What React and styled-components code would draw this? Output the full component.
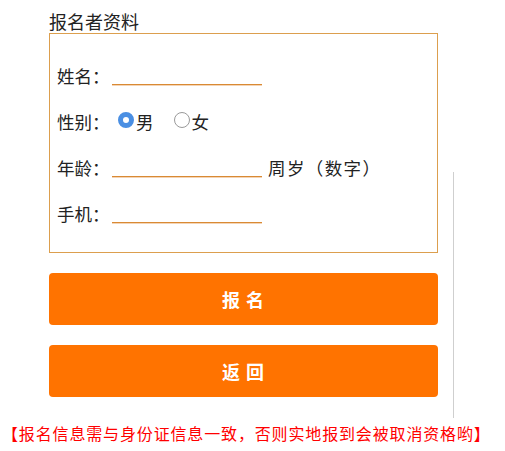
import React, { useState } from "react";
import styled, { createGlobalStyle } from "styled-components";

const GlobalStyle = createGlobalStyle`
  html, body {
    margin: 0;
    padding: 0;
    background: #ffffff;
  }
  body {
    font-family: "Noto Sans CJK SC", "Noto Sans", sans-serif;
    color: #222;
    text-spacing-trim: space-all;
  }
`;

const Page = styled.div`
  width: 505px;
  height: 451px;
  display: flex;
  flex-direction: column;
  overflow: hidden;
`;

const Top = styled.div`
  display: flex;
  gap: 15px;
  padding-left: 49px;
`;

const FormColumn = styled.div`
  width: 389px;
  display: flex;
  flex-direction: column;
`;

const Title = styled.div`
  margin-top: 10px;
  font-size: 18px;
  line-height: 23px;
  color: #222;
`;

const Box = styled.div`
  border: 1px solid #dc9f4e;
  padding: 18px 0 16px 7px;
  display: flex;
  flex-direction: column;
`;

const Row = styled.div`
  height: 46px;
  display: flex;
  align-items: center;
  font-size: 17.5px;
  color: #222;
`;

const Label = styled.span`
  width: 55px;
  flex: none;
`;

const Line = styled.input`
  width: 150px;
  height: 20px;
  box-sizing: border-box;
  border: 0;
  border-bottom: 1px solid #d98a34;
  box-shadow: 0 1px 0 rgba(230, 160, 90, 0.45);
  outline: none;
  background: transparent;
  padding: 0;
  font: inherit;
`;

const Unit = styled.span`
  margin-left: 6px;
  letter-spacing: 1.4px;
`;

const Option = styled.label`
  display: flex;
  align-items: center;
  margin-left: ${({ $first }) => ($first ? "6px" : "20px")};
  cursor: pointer;
`;

const Radio = styled.input`
  appearance: none;
  width: 16px;
  height: 16px;
  margin: 0 2px 2px 0;
  border-radius: 50%;
  box-sizing: border-box;
  border: 1px solid #9a9a9a;
  background: #fff;
  &:checked {
    border: 5px solid #4a8fe3;
  }
`;

const Button = styled.button`
  height: 52px;
  border: none;
  border-radius: 4px;
  background: #ff7300;
  color: #fff;
  font-family: inherit;
  font-size: 18px;
  font-weight: bold;
  letter-spacing: 1px;
  margin-top: 20px;
  cursor: pointer;
`;

const Divider = styled.div`
  width: 1px;
  height: 246px;
  margin-top: 172px;
  background: #cfcfcf;
`;

const Notice = styled.div`
  margin-top: 5px;
  padding-left: 2px;
  font-size: 16px;
  letter-spacing: 0.85px;
  line-height: 20px;
  color: #ff0000;
  white-space: nowrap;
`;

const App = () => {
  const [sex, setSex] = useState("m");
  return (
    <Page>
      <GlobalStyle />
      <Top>
        <FormColumn>
          <Title>报名者资料</Title>
          <Box>
            <Row>
              <Label>姓名：</Label>
              <Line type="text" />
            </Row>
            <Row>
              <Label>性别：</Label>
              <Option $first>
                <Radio type="radio" name="sex" checked={sex === "m"} onChange={() => setSex("m")} />
                男
              </Option>
              <Option>
                <Radio type="radio" name="sex" checked={sex === "f"} onChange={() => setSex("f")} />
                女
              </Option>
            </Row>
            <Row>
              <Label>年龄：</Label>
              <Line type="text" />
              <Unit>周岁（数字）</Unit>
            </Row>
            <Row>
              <Label>手机：</Label>
              <Line type="text" />
            </Row>
          </Box>
          <Button>报 名</Button>
          <Button>返 回</Button>
        </FormColumn>
        <Divider />
      </Top>
      <Notice>【报名信息需与身份证信息一致，否则实地报到会被取消资格哟】</Notice>
    </Page>
  );
};

export default App;
